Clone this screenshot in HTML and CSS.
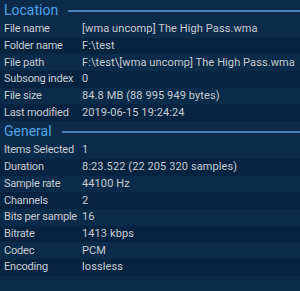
FILE: index.html
```html
<!DOCTYPE html>
<html>
<head>
<meta charset="utf-8">
<link rel="stylesheet" href="styles.css">
</head>
<body>
<div class="list">
  <div class="group"><span class="group-title">Location</span><span class="group-line"></span></div>
  <div class="row"><span class="label">File name</span><span class="value">[wma uncomp] The High Pass.wma</span></div>
  <div class="row dark"><span class="label">Folder name</span><span class="value">F:\test</span></div>
  <div class="row"><span class="label">File path</span><span class="value">F:\test\[wma uncomp] The High Pass.wma</span></div>
  <div class="row dark"><span class="label">Subsong index</span><span class="value">0</span></div>
  <div class="row"><span class="label">File size</span><span class="value">84.8 MB (88 995 949 bytes)</span></div>
  <div class="row dark"><span class="label">Last modified</span><span class="value">2019-06-15 19:24:24</span></div>
  <div class="group"><span class="group-title">General</span><span class="group-line"></span></div>
  <div class="row"><span class="label">Items Selected</span><span class="value">1</span></div>
  <div class="row dark"><span class="label">Duration</span><span class="value">8:23.522 (22 205 320 samples)</span></div>
  <div class="row"><span class="label">Sample rate</span><span class="value">44100 Hz</span></div>
  <div class="row dark"><span class="label">Channels</span><span class="value">2</span></div>
  <div class="row"><span class="label">Bits per sample</span><span class="value">16</span></div>
  <div class="row dark"><span class="label">Bitrate</span><span class="value">1413 kbps</span></div>
  <div class="row"><span class="label">Codec</span><span class="value">PCM</span></div>
  <div class="row dark"><span class="label">Encoding</span><span class="value">lossless</span></div>
</div>
</body>
</html>
```

FILE: styles.css
```css
html, body {
  margin: 0;
  padding: 0;
  background: #0c2a49;
}
body {
  width: 300px;
  height: 291px;
  overflow: hidden;
  font-family: "Roboto", "Open Sans", sans-serif;
  font-size: 11px;
  color: #c6ccd3;
}
.list {
  display: flex;
  flex-direction: column;
}
.group {
  height: 21px;
  display: flex;
  align-items: center;
  padding-left: 4px;
  gap: 10px;
}
.group-title {
  font-size: 14px;
  color: #4ea2e6;
  line-height: 21px;
}
.group-line {
  flex: 1;
  height: 2px;
  background: #4a80b4;
}
.row {
  height: 16.7px;
  display: grid;
  grid-template-columns: 78px 1fr;
  align-items: center;
  padding-left: 4px;
  white-space: nowrap;
  line-height: 16px;
}
.label {
  letter-spacing: -0.2px;
}
.value {
  letter-spacing: 0.1px;
}
.row.dark {
  background: #082340;
}
```
